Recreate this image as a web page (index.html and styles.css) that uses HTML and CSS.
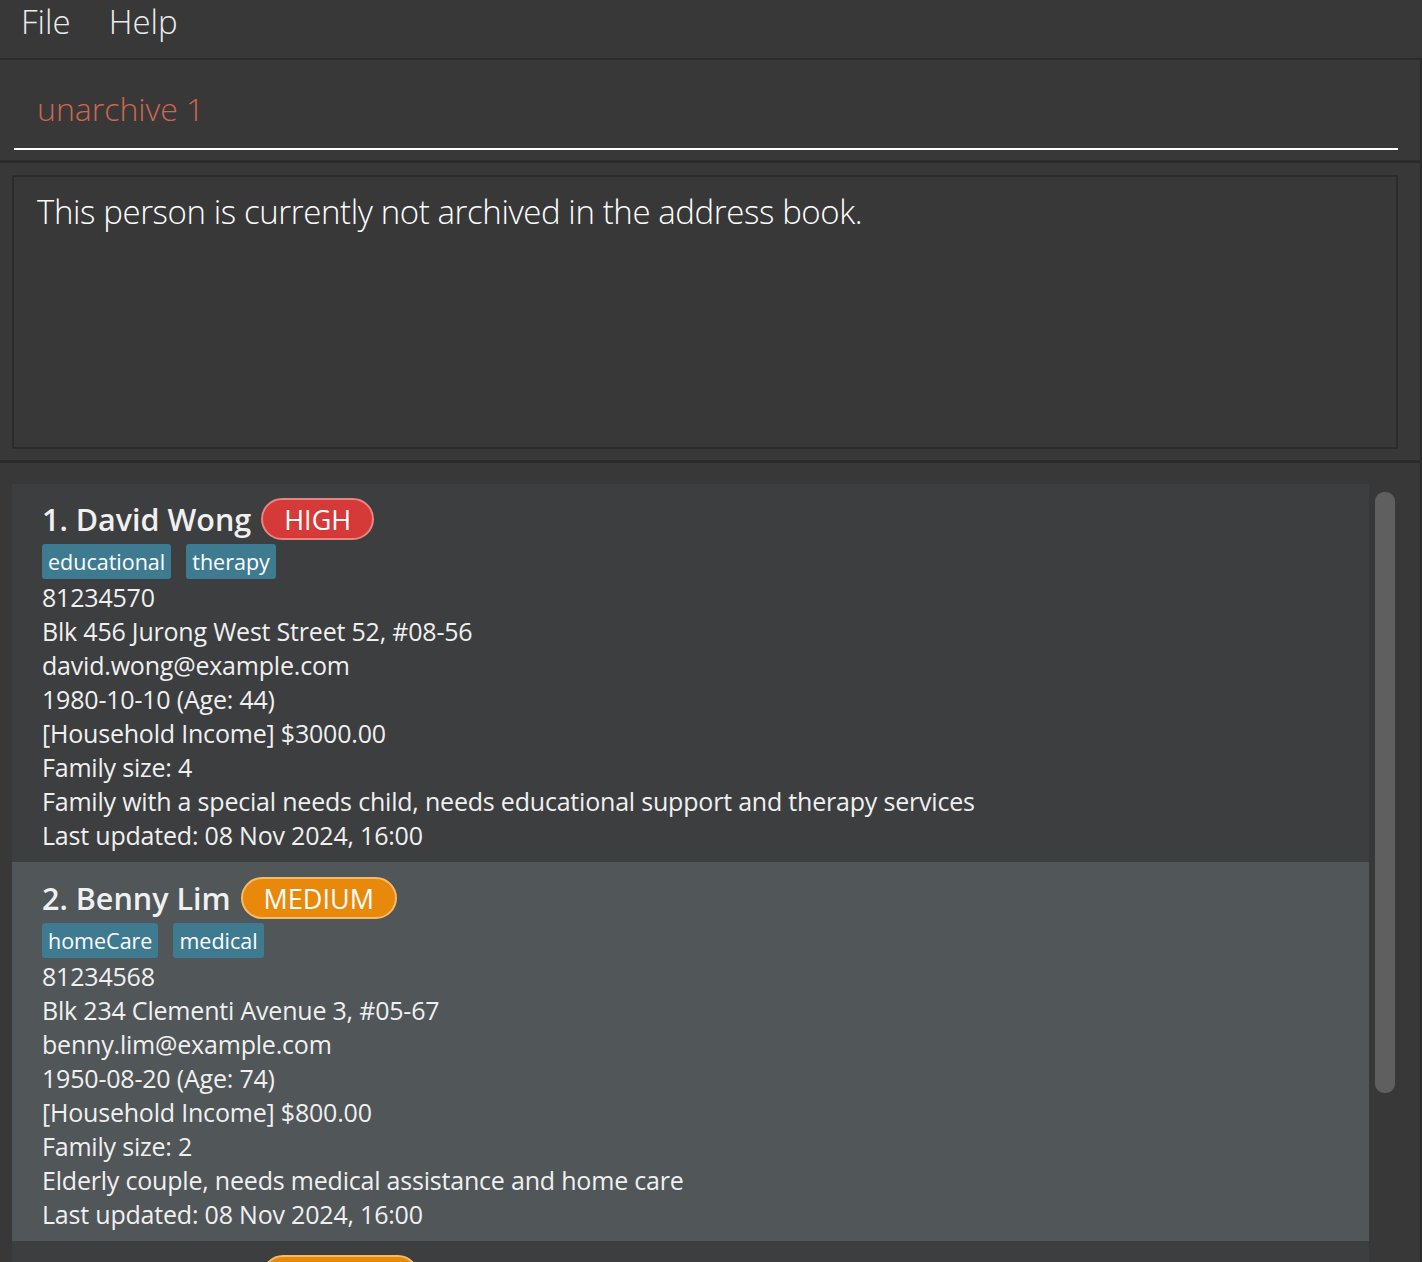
FILE: index.html
```html
<!DOCTYPE html>
<html>
<head>
<meta charset="utf-8">
<link rel="stylesheet" href="styles.css">
</head>
<body>
<div class="app">
  <div class="menubar">
    <span class="menu-item">File</span>
    <span class="menu-item">Help</span>
  </div>
  <div class="command-pane">
    <div class="command-field"><span class="command-text error">unarchive 1</span></div>
  </div>
  <div class="result-pane">
    <div class="result-box">This person is currently not archived in the address book.</div>
  </div>
  <div class="list-pane">
    <div class="list">
      <div class="card even">
        <div class="name-row"><span class="name">1. David Wong</span><span class="badge high">HIGH</span></div>
        <div class="tags"><span class="tag">educational</span><span class="tag">therapy</span></div>
        <div class="line">81234570</div>
        <div class="line">Blk 456 Jurong West Street 52, #08-56</div>
        <div class="line">david.wong@example.com</div>
        <div class="line">1980-10-10 (Age: 44)</div>
        <div class="line">[Household Income] $3000.00</div>
        <div class="line">Family size: 4</div>
        <div class="line">Family with a special needs child, needs educational support and therapy services</div>
        <div class="line">Last updated: 08 Nov 2024, 16:00</div>
      </div>
      <div class="card odd">
        <div class="name-row"><span class="name">2. Benny Lim</span><span class="badge medium">MEDIUM</span></div>
        <div class="tags"><span class="tag">homeCare</span><span class="tag">medical</span></div>
        <div class="line">81234568</div>
        <div class="line">Blk 234 Clementi Avenue 3, #05-67</div>
        <div class="line">benny.lim@example.com</div>
        <div class="line">1950-08-20 (Age: 74)</div>
        <div class="line">[Household Income] $800.00</div>
        <div class="line">Family size: 2</div>
        <div class="line">Elderly couple, needs medical assistance and home care</div>
        <div class="line">Last updated: 08 Nov 2024, 16:00</div>
      </div>
      <div class="card even">
        <div class="name-row"><span class="name">3. Claire Wong</span><span class="badge medium">MEDIUM</span></div>
        <div class="tags"><span class="tag">financial</span></div>
        <div class="line">81234569</div>
      </div>
    </div>
    <div class="scrollbar"><div class="thumb"></div></div>
  </div>
</div>
</body>
</html>
```
FILE: styles.css
```css
html, body {
  margin: 0;
  padding: 0;
  background: #383838;
  overflow: hidden;
}
.app {
  width: 1422px;
  height: 1262px;
  display: flex;
  flex-direction: column;
  box-sizing: border-box;
  background: #383838;
  overflow: hidden;
}
.menubar {
  height: 60px;
  display: flex;
  align-items: center;
  padding-left: 21px;
  gap: 38px;
  box-sizing: border-box;
  border-bottom: 2px solid #2b2b2b;
  flex: none;
}
.menu-item {
  font-family: "Open Sans", "Noto Sans", sans-serif;
  font-weight: 300;
  font-size: 33px;
  color: #ececec;
  line-height: 1;
  margin-top: -16px;
}
.command-pane, .result-pane, .list-pane {
  border-right: 2px solid #2b2b2b;
  box-sizing: border-box;
  flex: none;
}
.command-pane {
  height: 103px;
  padding: 0 22px 0 14px;
  border-bottom: 3px solid #2b2b2b;
  display: flex;
  align-items: flex-end;
}
.command-field {
  flex: 1;
  height: 88px;
  border-bottom: 2px solid #ffffff;
  margin-bottom: 10px;
  display: flex;
  align-items: center;
  padding-left: 23px;
  box-sizing: border-box;
}
.command-text {
  font-family: "Open Sans", "Noto Sans", sans-serif;
  font-weight: 300;
  font-size: 32px;
  margin-top: 6px;
}
.error { color: #d06651; }
.result-pane {
  height: 300px;
  padding: 12px 22px 11px 12px;
  border-bottom: 3px solid #2b2b2b;
}
.result-box {
  height: 100%;
  box-sizing: border-box;
  border: 2px solid #2b2b2b;
  padding: 13px 23px;
  font-family: "Open Sans", "Noto Sans", sans-serif;
  font-weight: 300;
  font-size: 33px;
  letter-spacing: -0.4px;
  color: #ffffff;
  line-height: 44px;
}
.list-pane {
  flex: 1;
  display: flex;
  padding: 21px 0 0 12px;
  min-height: 0;
}
.list {
  width: 1357px;
  flex: none;
  display: flex;
  flex-direction: column;
}
.card {
  padding: 14px 20px 10px 30px;
  flex: none;
  font-family: "Open Sans", "Noto Sans", sans-serif;
  color: #f0f0f0;
}
.card.even { background: #3c3e3f; }
.card.odd { background: #515658; padding-top: 15px; }
.name-row {
  display: flex;
  align-items: center;
  height: 42px;
  gap: 10px;
}
.name {
  font-size: 30.5px;
  font-weight: 600;
  color: #f0f0f0;
}
.badge {
  height: 42px;
  box-sizing: border-box;
  border-radius: 21px;
  border: 2px solid;
  padding: 0 21px;
  display: flex;
  align-items: center;
  font-size: 27px;
  font-weight: 400;
  color: #ffffff;
}
.badge.high { background: #d63a38; border-color: #e88582; }
.badge.medium { background: #e8890c; border-color: #f4bb6a; }
.tags {
  display: flex;
  gap: 15px;
  margin-top: 4px;
  height: 35px;
}
.tag {
  background: #3e7b91;
  border-radius: 3px;
  color: #ffffff;
  font-size: 21.5px;
  padding: 0 6px;
  display: flex;
  align-items: center;
}
.line {
  font-size: 25px;
  letter-spacing: -0.2px;
  line-height: 34px;
  white-space: nowrap;
}
.tags + .line { margin-top: 1px; }
.scrollbar {
  width: 20px;
  margin-left: 6px;
  padding-top: 8px;
  flex: none;
}
.thumb {
  height: 601px;
  background: #5f5f5f;
  border-radius: 9px;
}
```
